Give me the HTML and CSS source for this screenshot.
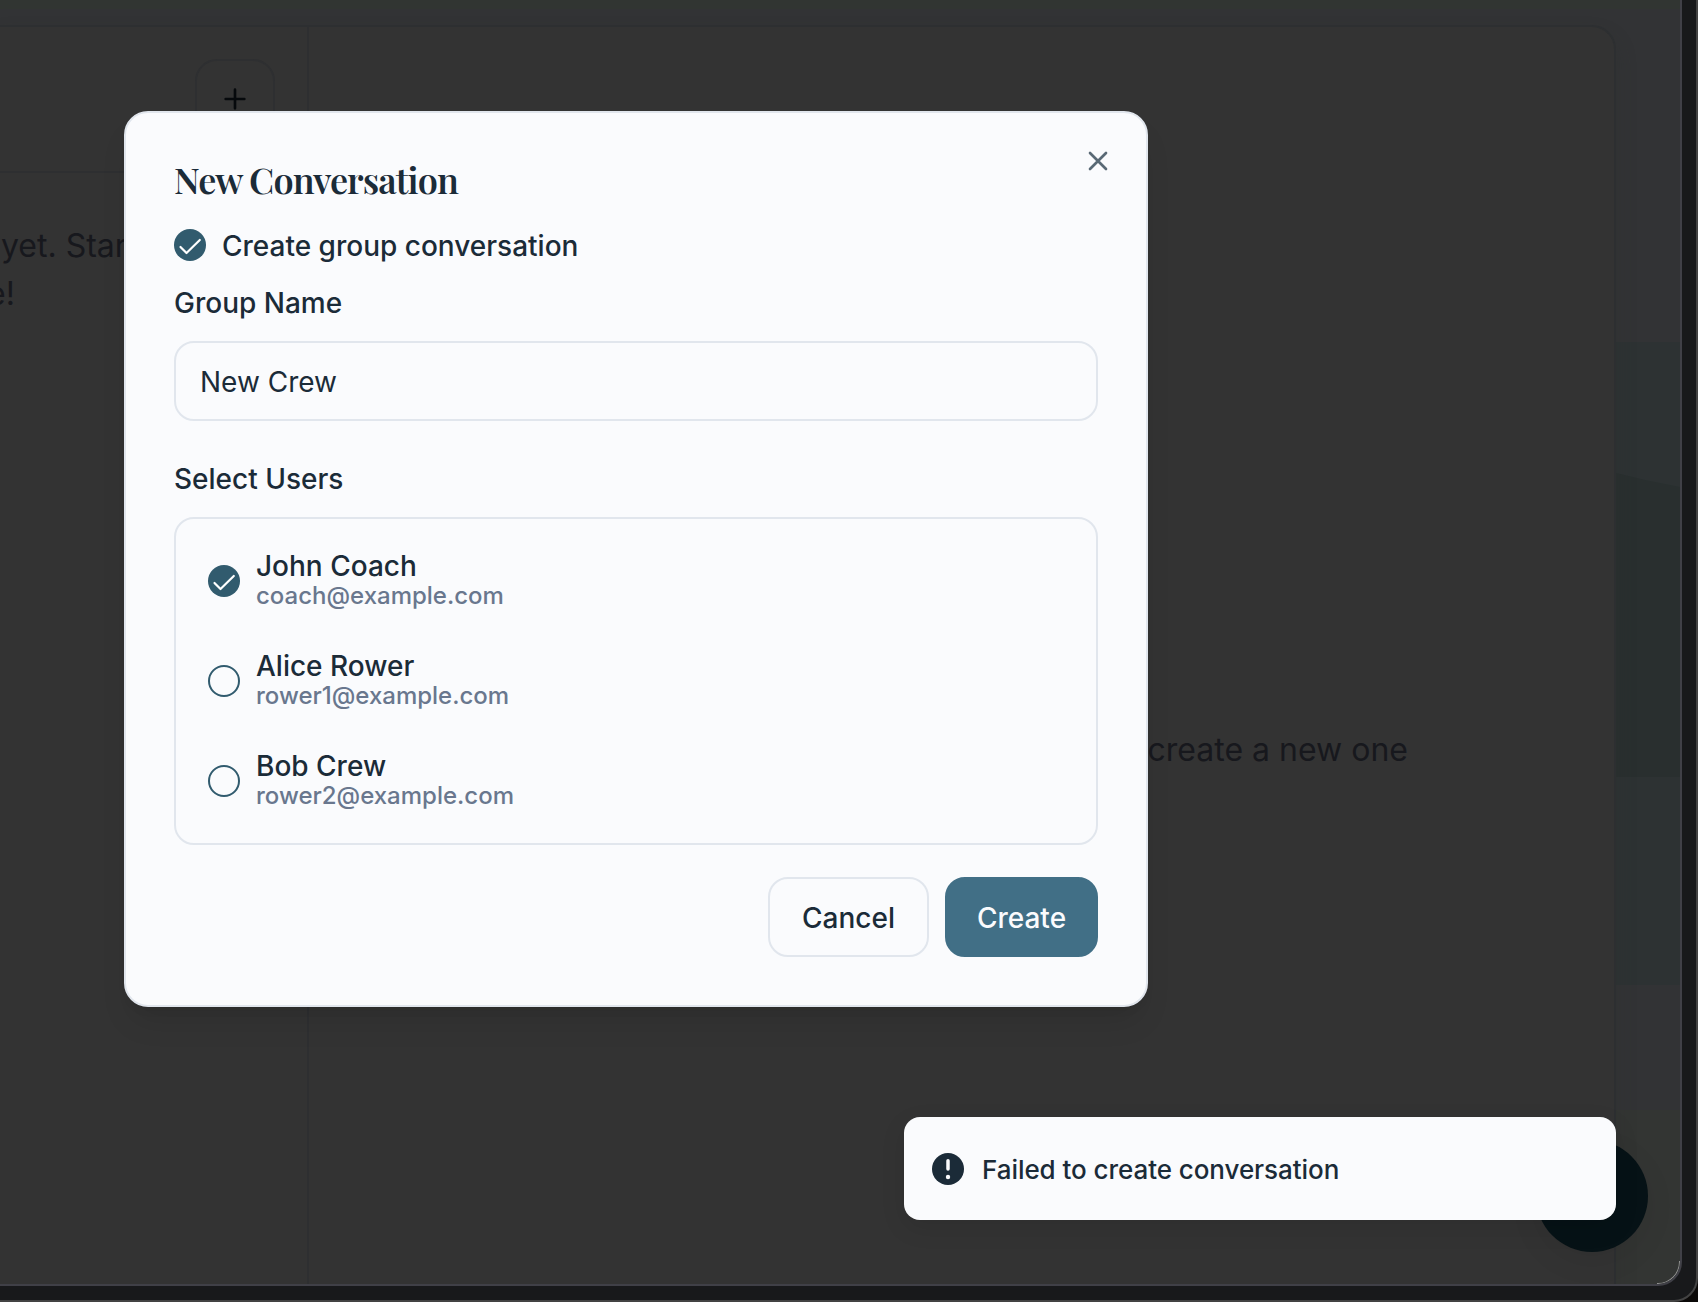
FILE: index.html
```html
<!DOCTYPE html>
<html lang="en">
<head>
<meta charset="utf-8">
<title>Messages</title>
<link rel="stylesheet" href="styles.css">
</head>
<body>
<div class="device">
  <div class="screen">
    <div class="strip strip-top"></div>
    <div class="wave wave-a"></div>
    <div class="wave wave-b"></div>
    <div class="strip strip-bottom"></div>
    <main class="panel">
      <aside class="sidebar">
        <header class="sidebar-head">
          <button class="add" aria-label="New conversation"><svg viewBox="0 0 24 24"><path d="M5 12h14M12 5v14"/></svg></button>
        </header>
        <p class="empty">yet. Start</p>
        <p class="empty empty-end">e!</p>
      </aside>
      <section class="thread"><p class="hint">create a new one</p></section>
    </main>
    <div class="fab"></div>
  </div>
</div>

<div class="dialog" role="dialog">
  <button class="close" aria-label="Close"><svg viewBox="0 0 24 24"><path d="M18 6 6 18M6 6l12 12"/></svg></button>
  <h2 class="title">New Conversation</h2>
  <label class="group-toggle">
    <span class="check checked"><svg viewBox="0 0 32 32"><path d="M6.5 18l6 6L25.8 11"/></svg></span>
    <span class="label">Create group conversation</span>
  </label>
  <div class="label field-label">Group Name</div>
  <div class="input">New Crew</div>
  <div class="label field-label users-label">Select Users</div>
  <ul class="users">
    <li class="user">
      <span class="check checked"><svg viewBox="0 0 32 32"><path d="M6.5 18l6 6L25.8 11"/></svg></span>
      <div><div class="name">John Coach</div><div class="email">coach@example.com</div></div>
    </li>
    <li class="user">
      <span class="check"></span>
      <div><div class="name">Alice Rower</div><div class="email">rower1@example.com</div></div>
    </li>
    <li class="user">
      <span class="check"></span>
      <div><div class="name">Bob Crew</div><div class="email">rower2@example.com</div></div>
    </li>
  </ul>
  <div class="actions">
    <button class="btn cancel">Cancel</button>
    <button class="btn create">Create</button>
  </div>
</div>

<div class="toast" role="status">
  <svg viewBox="0 0 32 32"><circle cx="16" cy="16" r="16"/><path d="M16 7.800v8.200"/><circle class="dot" cx="16" cy="24" r="2.200"/></svg>
  <span>Failed to create conversation</span>
</div>
</body>
</html>
```
FILE: styles.css
```css
* { box-sizing: border-box; }

body {
  margin: 0;
  width: 1698px;
  height: 1302px;
  overflow: hidden;
  position: relative;
  background: #0b0908;
  color: #1b2b38;
  font-family: Inter, "Liberation Sans", sans-serif;
  font-optical-sizing: none;
  font-variation-settings: "opsz" 14;
}

button { font: inherit; font-variation-settings: inherit; margin: 0; padding: 0; background: none; }
h2, p, ul { margin: 0; padding: 0; }
svg { display: block; }

.device {
  width: 1698px;
  height: 1302px;
  padding-right: 14px;
  padding-bottom: 14px;
  background: #18191b;
  border-right: 2px solid #434343;
  border-bottom: 2px solid #434343;
  border-bottom-right-radius: 24px;
}

.screen {
  position: relative;
  height: 1286px;
  padding: 25px 64px 0 0;
  overflow: hidden;
  background: #323335;
  border-right: 2px solid #404047;
  border-bottom: 2px solid #404047;
  border-bottom-right-radius: 24px;
}
/* glint on the glass corner */
.screen::after {
  content: "";
  position: absolute;
  right: 0;
  bottom: 0;
  width: 22px;
  height: 22px;
  border: solid rgba(210, 210, 210, .6);
  border-width: 0 1px 1px 0;
  border-bottom-right-radius: 22px;
}

.panel {
  position: relative;
  display: flex;
  height: 1300px;
  background: #333333;
  border-top: 2px solid #2d2f31;
  border-right: 2px solid #2d2f31;
  border-top-right-radius: 24px;
  box-shadow: 0 12px 20px rgba(46, 50, 48, .3);
}

/* backdrop scenery, visible beside the panel */
.strip, .wave { position: absolute; left: 0; right: 0; }
.strip-top { top: 0; height: 9px; background: #313532; }
.wave-a { top: 342px; height: 643px; background: #2d3233; }
.wave-b { top: 471px; height: 306px; background: #292f2f; clip-path: polygon(0 0, 1616px 2px, 1645px 9px, 1680px 16px, 1680px 100%, 0 100%); }
.strip-bottom { top: 1110px; bottom: 0; background: #333533; }

.sidebar { width: 309px; border-right: 2px solid #2e2f31; }
.sidebar-head {
  display: flex;
  justify-content: flex-end;
  height: 146px;
  margin-bottom: 49px;
  padding: 32px 32px 0 0;
  border-bottom: 2px solid #2e2f31;
}
.add { width: 80px; height: 80px; padding: 22px; border: 2px solid #2e2f31; border-radius: 22px; }
.add svg, .close svg { width: 32px; height: 32px; fill: none; stroke: #06090c; stroke-width: 2; stroke-linecap: round; }
.empty, .hint { font-size: 32px; line-height: 48px; color: #17181d; white-space: nowrap; }
.empty { padding-left: 1px; }
.empty-end { margin-left: -14px; }
.thread { flex: 1; padding: 699px 206px 0 0; text-align: right; }

.fab {
  position: absolute;
  left: 1536px;
  top: 1140px;
  width: 112px;
  height: 112px;
  border-radius: 50%;
  background: #061216;
  box-shadow: 0 10px 30px rgba(0, 0, 0, .07);
}

.dialog {
  position: absolute;
  left: 124px;
  top: 111px;
  width: 1024px;
  height: 896px;
  padding: 48px;
  background: #fafbfd;
  border: 2px solid #e1e6ed;
  border-radius: 24px;
  box-shadow: 0 20px 30px -6px rgba(0, 0, 0, .1), 0 8px 12px -8px rgba(0, 0, 0, .1);
}
.close { position: absolute; right: 32px; top: 32px; border: 0; }
.close svg { stroke: #596975; }

.title {
  height: 36px;
  font: 600 36px/36px "Playfair Display", "Liberation Serif", serif;
  letter-spacing: -.9px;
  white-space: nowrap;
}
.label, .name { font-size: 28px; line-height: 28px; font-weight: 500; }

.group-toggle { display: flex; align-items: center; gap: 16px; height: 32px; margin-top: 32px; }
.group-toggle .label { padding-top: 2px; }
.check { flex: none; width: 32px; height: 32px; border: 2px solid #315b6e; border-radius: 50%; }
.checked { border: 0; background: #315b6e; }
.check path { fill: none; stroke: #fff; stroke-width: 2.200; stroke-linecap: round; stroke-linejoin: round; }

.field-label { margin-top: 28px; }
.input {
  height: 80px;
  margin-top: 24px;
  padding: 0 24px;
  border: 2px solid #e1e6ed;
  border-radius: 20px;
  font-size: 28px;
  line-height: 78px;
}
.users-label { margin-top: 44px; }
.users { height: 328px; margin-top: 24px; padding: 16px; list-style: none; border: 2px solid #e1e6ed; border-radius: 20px; }
.user { display: flex; align-items: center; gap: 16px; height: 92px; padding-left: 16px; margin-bottom: 8px; }
.name { margin-bottom: 2px; }
.email { font-size: 24px; line-height: 28px; font-weight: 500; color: #69778e; }
.actions { display: flex; justify-content: flex-end; gap: 16px; margin-top: 32px; }
.btn { height: 80px; padding-top: 2px; border: 2px solid #e1e6ed; border-radius: 20px; font-size: 28px; font-weight: 500; color: #1b2b38; }
.cancel { width: 161px; }
.create { width: 153px; color: #fafbfd; background: #416f86; border-color: #416f86; }

.toast {
  position: absolute;
  left: 904px;
  top: 1117px;
  width: 712px;
  height: 103px;
  display: flex;
  align-items: center;
  gap: 18px;
  padding-left: 28px;
  background: #fafbfd;
  border-radius: 16px;
  font-size: 26px;
  font-weight: 500;
  letter-spacing: -.06px;
  box-shadow: 0 8px 24px rgba(0, 0, 0, .1);
}
.toast span { padding-top: 2px; }
.toast svg { width: 32px; height: 32px; fill: #1b2b38; }
.toast path { stroke: #fafbfd; stroke-width: 3.500; stroke-linecap: round; }
.toast .dot { fill: #fafbfd; }
```
